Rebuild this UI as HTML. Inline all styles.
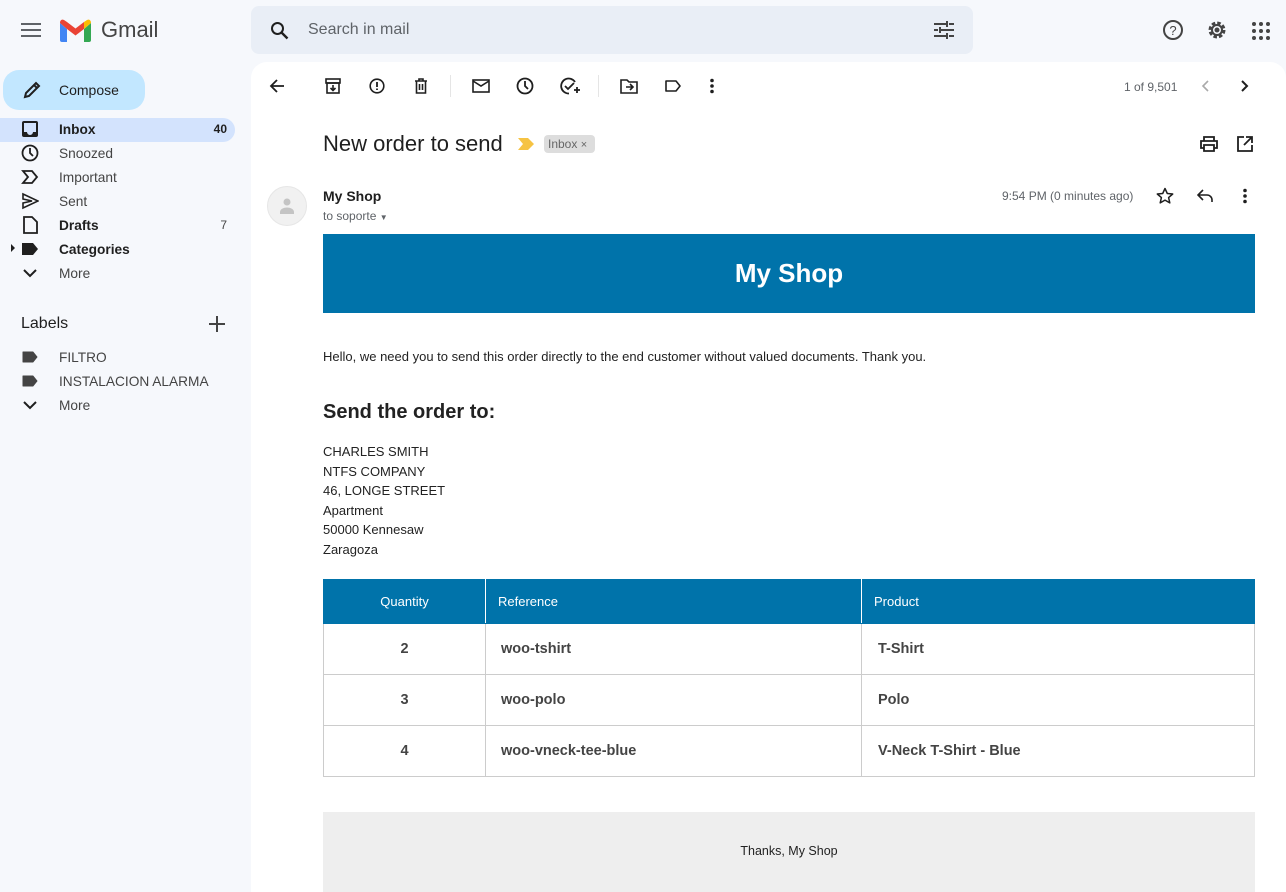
<!DOCTYPE html>
<html><head><meta charset="utf-8"><style>
*{margin:0;padding:0;box-sizing:border-box}
body{width:1286px;height:892px;overflow:hidden;background:#f6f8fc;font-family:"Liberation Sans",Arial,sans-serif;position:relative;color:#1f1f1f}
.a{position:absolute}
svg{display:block}
.nav{position:absolute;left:0;width:235px;height:24px;font-size:13.7px;color:#444}
.nav span.t{position:absolute;left:59px;top:4px}
.nav svg{position:absolute;left:21px;top:2px}
.cnt{position:absolute;right:8px;top:4px;font-size:12px}
table{border-collapse:collapse}
td,th{border:1px solid #ccc}
</style></head><body>
<!-- header -->
<svg class="a" style="left:21px;top:21px" width="20" height="18"><path d="M0 3h20M0 9h20M0 15h20" stroke="#5f6368" stroke-width="2"/></svg>
<svg class="a" style="left:60px;top:19px" width="31" height="23" viewBox="0 0 31 23"><path d="M0 4v17a2 2 0 0 0 2 2h5V10z" fill="#4285f4"/><path d="M31 4v17a2 2 0 0 1-2 2h-5V10z" fill="#34a853"/><path d="M0 4l7 6 8.5 6.5L24 10V3l-8.5 6.5L7 3 4 1C2 0 0 1 0 4z" fill="#ea4335"/><path d="M24 3l3-2c2-1 4 0 4 3l-7 6z" fill="#fbbc04"/></svg>
<div class="a" style="left:101px;top:17px;font-size:22px;color:#444">Gmail</div>
<div class="a" style="left:251px;top:6px;width:722px;height:48px;background:#e9eef6;border-radius:8px"></div>
<svg class="a" style="left:270px;top:21px" width="20" height="20"><circle cx="7.5" cy="7.5" r="5.5" stroke="#1f1f1f" stroke-width="2" fill="none"/><path d="M11.5 11.5l6 6" stroke="#1f1f1f" stroke-width="2.4"/></svg>
<div class="a" style="left:308px;top:21px;font-size:16px;color:#5f6368">Search in mail</div>
<svg class="a" style="left:934px;top:21px" width="20" height="18"><path d="M0 3h12M15 3h5M0 9h4M7 9h13M0 15h12M15 15h5M13 0v6M6 6v6M13 12v6" stroke="#444" stroke-width="2"/></svg>
<svg class="a" style="left:1162px;top:19px" width="22" height="22"><circle cx="11" cy="11" r="9" stroke="#444" stroke-width="2" fill="none"/><text x="11" y="16" font-size="13" text-anchor="middle" fill="#444" font-family="Liberation Sans">?</text></svg>
<svg class="a" style="left:1206px;top:19px" width="22" height="22" viewBox="0 0 22 22"><circle cx="11" cy="11" r="7" stroke="#444" stroke-width="3" stroke-dasharray="3.5 2" fill="none"/><circle cx="11" cy="11" r="5" stroke="#444" stroke-width="2" fill="none"/><circle cx="11" cy="11" r="2.5" fill="#444"/></svg>
<svg class="a" style="left:1252px;top:22px" width="18" height="18"><g fill="#444"><circle cx="2" cy="2" r="2"/><circle cx="9" cy="2" r="2"/><circle cx="16" cy="2" r="2"/><circle cx="2" cy="9" r="2"/><circle cx="9" cy="9" r="2"/><circle cx="16" cy="9" r="2"/><circle cx="2" cy="16" r="2"/><circle cx="9" cy="16" r="2"/><circle cx="16" cy="16" r="2"/></g></svg>
<!-- sidebar -->
<div class="a" style="left:3px;top:70px;width:142px;height:40px;background:#c2e7ff;border-radius:16px"></div>
<svg class="a" style="left:22px;top:80px" width="20" height="20"><path d="M3 17l1-4L14 3l3 3L7 16z M12 5l3 3" stroke="#1f1f1f" stroke-width="2" fill="none"/></svg>
<div class="a" style="left:59px;top:82px;font-size:14px;color:#1f1f1f">Compose</div>
<div class="a" style="left:0;top:118px;width:235px;height:24px;background:#d3e3fd;border-radius:0 12px 12px 0"></div>
<div class="nav" style="top:118px;font-weight:bold;color:#1f1f1f"><svg width="18" height="18"><rect x="1" y="1" width="16" height="16" rx="2" fill="#1f1f1f"/><path d="M3 3h12v9h-3a3 3 0 0 1-6 0H3z" fill="#d3e3fd"/></svg><span class="t">Inbox</span><span class="cnt">40</span></div>
<div class="nav" style="top:142px"><svg width="18" height="18"><circle cx="9" cy="9" r="7.5" stroke="#1f1f1f" stroke-width="1.8" fill="none"/><path d="M9 4v5l3 3" stroke="#1f1f1f" stroke-width="1.8" fill="none"/></svg><span class="t">Snoozed</span></div>
<div class="nav" style="top:166px"><svg width="18" height="18"><path d="M2 3h9l5 6-5 6H2l5-6z" stroke="#1f1f1f" stroke-width="1.8" fill="none"/></svg><span class="t">Important</span></div>
<div class="nav" style="top:190px"><svg width="18" height="18"><path d="M2 2l15 7-15 7v-5l9-2-9-2z" stroke="#1f1f1f" stroke-width="1.6" fill="none"/></svg><span class="t">Sent</span></div>
<div class="nav" style="top:214px;font-weight:bold;color:#1f1f1f"><svg width="18" height="18"><path d="M3 1h8l5 5v11H3z" stroke="#1f1f1f" stroke-width="1.8" fill="none"/></svg><span class="t">Drafts</span><span class="cnt" style="font-weight:normal;color:#444">7</span></div>
<div class="nav" style="top:238px;font-weight:bold;color:#1f1f1f"><svg style="left:11px;top:6px" width="5" height="8"><path d="M0 0l4 4-4 4z" fill="#1f1f1f"/></svg><svg width="18" height="18"><path d="M1 3h11l5 6-5 6H1z" fill="#1f1f1f"/></svg><span class="t">Categories</span></div>
<div class="nav" style="top:262px"><svg width="18" height="18"><path d="M3 6l6 6 6-6" stroke="#1f1f1f" stroke-width="2" fill="none"/></svg><span class="t">More</span></div>
<div class="a" style="left:21px;top:315px;font-size:16px;color:#1f1f1f">Labels</div>
<svg class="a" style="left:209px;top:316px" width="16" height="16"><path d="M8 0v16M0 8h16" stroke="#444" stroke-width="2"/></svg>
<div class="nav" style="top:346px"><svg width="18" height="18"><path d="M2 4h10l4 5-4 5H2z" fill="#444" stroke="#444" stroke-linejoin="round"/></svg><span class="t">FILTRO</span></div>
<div class="nav" style="top:370px"><svg width="18" height="18"><path d="M2 4h10l4 5-4 5H2z" fill="#444" stroke="#444" stroke-linejoin="round"/></svg><span class="t">INSTALACION ALARMA</span></div>
<div class="nav" style="top:394px"><svg width="18" height="18"><path d="M3 6l6 6 6-6" stroke="#1f1f1f" stroke-width="2" fill="none"/></svg><span class="t">More</span></div>
<!-- main -->
<div class="a" style="left:251px;top:62px;width:1035px;height:830px;background:#fff;border-radius:16px 16px 0 0"></div>
<svg class="a" style="left:269px;top:78px" width="16" height="16"><path d="M15 8H2M8 2L2 8l6 6" stroke="#1f1f1f" stroke-width="1.8" fill="none"/></svg>
<svg class="a" style="left:325px;top:78px" width="16" height="16"><rect x="1" y="1" width="14" height="4" stroke="#1f1f1f" stroke-width="1.6" fill="none"/><rect x="2" y="5" width="12" height="10" stroke="#1f1f1f" stroke-width="1.6" fill="none"/><path d="M8 7v6M5.5 10L8 12.5 10.5 10" stroke="#1f1f1f" stroke-width="1.6" fill="none"/></svg>
<svg class="a" style="left:369px;top:78px" width="16" height="16"><circle cx="8" cy="8" r="6.8" stroke="#1f1f1f" stroke-width="1.6" fill="none"/><path d="M8 4v5M8 10.5v1.5" stroke="#1f1f1f" stroke-width="1.8"/></svg>
<svg class="a" style="left:413px;top:78px" width="16" height="16"><path d="M2 3h12M6 3V1h4v2M3.5 3v12h9V3M6.5 6v6M9.5 6v6" stroke="#1f1f1f" stroke-width="1.6" fill="none"/></svg>
<div class="a" style="left:450px;top:75px;width:1px;height:22px;background:#e5e5e5"></div>
<svg class="a" style="left:472px;top:79px" width="18" height="14"><rect x="1" y="1" width="16" height="12" stroke="#1f1f1f" stroke-width="1.6" fill="none"/><path d="M1 2l8 5 8-5" stroke="#1f1f1f" stroke-width="1.6" fill="none"/></svg>
<svg class="a" style="left:516px;top:77px" width="18" height="18"><circle cx="9" cy="9" r="7.5" stroke="#1f1f1f" stroke-width="1.8" fill="none"/><path d="M9 4v5l3 3" stroke="#1f1f1f" stroke-width="1.8" fill="none"/></svg>
<svg class="a" style="left:560px;top:77px" width="20" height="18"><path d="M15 5A7.5 7.5 0 1 0 9 16.5" stroke="#1f1f1f" stroke-width="1.8" fill="none"/><path d="M5 9l3 3 6-6M14 13h6M17 10v6" stroke="#1f1f1f" stroke-width="1.8" fill="none"/></svg>
<div class="a" style="left:598px;top:75px;width:1px;height:22px;background:#e5e5e5"></div>
<svg class="a" style="left:620px;top:78px" width="18" height="16"><path d="M1 2h6l2 2h8v11H1z" stroke="#1f1f1f" stroke-width="1.6" fill="none"/><path d="M6 9h7M10 6l3 3-3 3" stroke="#1f1f1f" stroke-width="1.6" fill="none"/></svg>
<svg class="a" style="left:665px;top:79px" width="16" height="14"><path d="M1 2h10l4 5-4 5H1z" stroke="#1f1f1f" stroke-width="1.6" fill="none" stroke-linejoin="round"/></svg>
<svg class="a" style="left:710px;top:78px" width="4" height="16"><circle cx="2" cy="2.5" r="1.8" fill="#1f1f1f"/><circle cx="2" cy="8" r="1.8" fill="#1f1f1f"/><circle cx="2" cy="13.5" r="1.8" fill="#1f1f1f"/></svg>
<div class="a" style="left:1124px;top:80px;font-size:12px;color:#5f6368">1 of 9,501</div>
<svg class="a" style="left:1201px;top:80px" width="8" height="12"><path d="M7 1L2 6l5 5" stroke="#aaa" stroke-width="1.6" fill="none"/></svg>
<svg class="a" style="left:1241px;top:80px" width="8" height="12"><path d="M1 1l5 5-5 5" stroke="#1f1f1f" stroke-width="2" fill="none"/></svg>
<div class="a" style="left:323px;top:131px;font-size:22px;color:#1f1f1f">New order to send</div>
<svg class="a" style="left:518px;top:138px" width="16" height="12"><path d="M0 0h10l6 6-6 6H0l5-6z" fill="#f6c343"/></svg>
<div class="a" style="left:544px;top:135px;width:51px;height:18px;background:#ddd;border-radius:4px;font-size:12px;color:#666;padding:2px 0 0 4px">Inbox <span style="font-size:11px">×</span></div>
<svg class="a" style="left:1200px;top:136px" width="18" height="16"><path d="M4 5V1h10v4M4 12H1V5h16v7h-3M4 9h10v6H4z" stroke="#1f1f1f" stroke-width="1.8" fill="none"/></svg>
<svg class="a" style="left:1237px;top:136px" width="16" height="16"><path d="M7 1H1v14h14V9M9 1h6v6M15 1L7 9" stroke="#1f1f1f" stroke-width="1.8" fill="none"/></svg>
<div class="a" style="left:267px;top:186px;width:40px;height:40px;border-radius:50%;background:#f1f1f1;border:1px solid #e6e6e6"></div>
<svg class="a" style="left:279px;top:197px" width="16" height="18"><circle cx="8" cy="5" r="3.5" fill="#c4c4c4"/><path d="M1 17v-2c0-3 4-4.5 7-4.5s7 1.5 7 4.5v2z" fill="#c4c4c4"/></svg>
<div class="a" style="left:323px;top:188px;font-size:14px;font-weight:bold;color:#1f1f1f">My Shop</div>
<div class="a" style="left:323px;top:209px;font-size:12px;color:#5f6368">to soporte <span style="font-size:8px">▼</span></div>
<div class="a" style="left:1002px;top:189px;font-size:12px;color:#5f6368">9:54 PM (0 minutes ago)</div>
<svg class="a" style="left:1156px;top:187px" width="18" height="18"><path d="M9 1.5l2.3 5 5.4.5-4.1 3.6 1.2 5.3L9 13.1 4.2 15.9l1.2-5.3L1.3 7l5.4-.5z" stroke="#1f1f1f" stroke-width="1.5" fill="none" stroke-linejoin="round"/></svg>
<svg class="a" style="left:1197px;top:189px" width="16" height="14"><path d="M6 1L1 6l5 5M1 6h9a5 5 0 0 1 5 5v2" stroke="#1f1f1f" stroke-width="1.6" fill="none"/></svg>
<svg class="a" style="left:1243px;top:188px" width="4" height="16"><circle cx="2" cy="2.5" r="1.8" fill="#1f1f1f"/><circle cx="2" cy="8" r="1.8" fill="#1f1f1f"/><circle cx="2" cy="13.5" r="1.8" fill="#1f1f1f"/></svg>
<!-- email body -->
<div class="a" style="left:323px;top:234px;width:932px;height:79px;background:#0073aa;color:#fff;font-size:26px;font-weight:bold;text-align:center;line-height:79px">My Shop</div>
<div class="a" style="left:323px;top:349px;font-size:13px;color:#222">Hello, we need you to send this order directly to the end customer without valued documents. Thank you.</div>
<div class="a" style="left:323px;top:401px;font-size:20px;font-weight:bold;color:#222">Send the order to:</div>
<div class="a" style="left:323px;top:442px;font-size:13px;color:#222;line-height:19.6px">CHARLES SMITH<br>NTFS COMPANY<br>46, LONGE STREET<br>Apartment<br>50000 Kennesaw<br>Zaragoza</div>
<table class="a" style="left:323px;top:579px;width:932px;font-size:14.5px;color:#444">
<tr style="height:44px;background:#0073aa;color:#fff;font-size:13px"><th style="width:162px;font-weight:normal;border-color:#0073aa;border-right-color:#fff">Quantity</th><th style="width:376px;text-align:left;padding-left:12px;font-weight:normal;border-color:#0073aa;border-right-color:#fff">Reference</th><th style="text-align:left;padding-left:12px;font-weight:normal;border-color:#0073aa">Product</th></tr>
<tr style="height:51px;font-weight:bold"><td style="text-align:center">2</td><td style="padding-left:15px">woo-tshirt</td><td style="padding-left:16px">T-Shirt</td></tr>
<tr style="height:51px;font-weight:bold"><td style="text-align:center">3</td><td style="padding-left:15px">woo-polo</td><td style="padding-left:16px">Polo</td></tr>
<tr style="height:51px;font-weight:bold"><td style="text-align:center">4</td><td style="padding-left:15px">woo-vneck-tee-blue</td><td style="padding-left:16px">V-Neck T-Shirt - Blue</td></tr>
</table>
<div class="a" style="left:323px;top:812px;width:932px;height:80px;background:#eee;font-size:12.5px;color:#222;text-align:center;padding-top:32px">Thanks, My Shop</div>
</body></html>
